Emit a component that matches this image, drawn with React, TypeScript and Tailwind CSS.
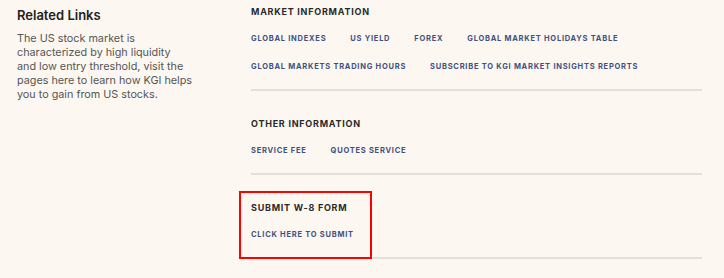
import React from "react";

type Section = {
  title: string;
  rows: string[][];
  pt: string;
  boxed?: boolean;
};

const sections: Section[] = [
  {
    title: "MARKET INFORMATION",
    pt: "pt-[5px]",
    rows: [
      ["GLOBAL INDEXES", "US YIELD", "FOREX", "GLOBAL MARKET HOLIDAYS TABLE"],
      ["GLOBAL MARKETS TRADING HOURS", "SUBSCRIBE TO KGI MARKET INSIGHTS REPORTS"],
    ],
  },
  {
    title: "OTHER INFORMATION",
    pt: "pt-[26px]",
    rows: [["SERVICE FEE", "QUOTES SERVICE"]],
  },
  {
    title: "SUBMIT W-8 FORM",
    pt: "pt-[26px]",
    rows: [["CLICK HERE TO SUBMIT"]],
    boxed: true,
  },
];

const introLines = [
  "The US stock market is",
  "characterized by high liquidity",
  "and low entry threshold, visit the",
  "pages here to learn how KGI helps",
  "you to gain from US stocks.",
];

const InfoSection = ({ section }: { section: Section }) => (
  <div className={`relative ${section.pt}`}>
    <h3 className="h-[14px] text-[9px] leading-[14px] font-bold tracking-[0.75px] text-[#2a2a2a]">
      {section.title}
    </h3>
    <div className="mt-[13px] flex flex-col gap-y-[14px]">
      {section.rows.map((row, i) => (
        <div key={i} className="flex gap-x-[24px]">
          {row.map((link) => (
            <a
              key={link}
              href="#"
              className="text-[7.5px] leading-[14px] font-bold tracking-[0.75px] text-[#3d5282] whitespace-nowrap"
            >
              {link}
            </a>
          ))}
        </div>
      ))}
    </div>
    <div className="mt-[15px] h-[2px] bg-[#e3dfda]" />
    {section.boxed && (
      <div className="absolute left-[-12px] top-[16px] w-[133px] h-[68px] border-2 border-[#ff0000]" />
    )}
  </div>
);

const App = () => {
  return (
    <div
      className="w-[724px] h-[278px] bg-[#fdf7f1] flex overflow-hidden"
      style={{ fontFamily: "Inter, 'Open Sans', sans-serif" }}
    >
      <div className="w-[251px] pl-[17px] pt-[7px]">
        <h2 className="text-[13px] leading-[16px] font-semibold text-[#222]">Related Links</h2>
        <p className="mt-[9px] w-[200px] text-[10.8px] leading-[14px] text-[#555] whitespace-nowrap">
          {introLines.map((line) => (
            <span key={line} className="block">
              {line}
            </span>
          ))}
        </p>
      </div>
      <div className="w-[451px]">
        {sections.map((s) => (
          <InfoSection key={s.title} section={s} />
        ))}
      </div>
    </div>
  );
};

export default App;
